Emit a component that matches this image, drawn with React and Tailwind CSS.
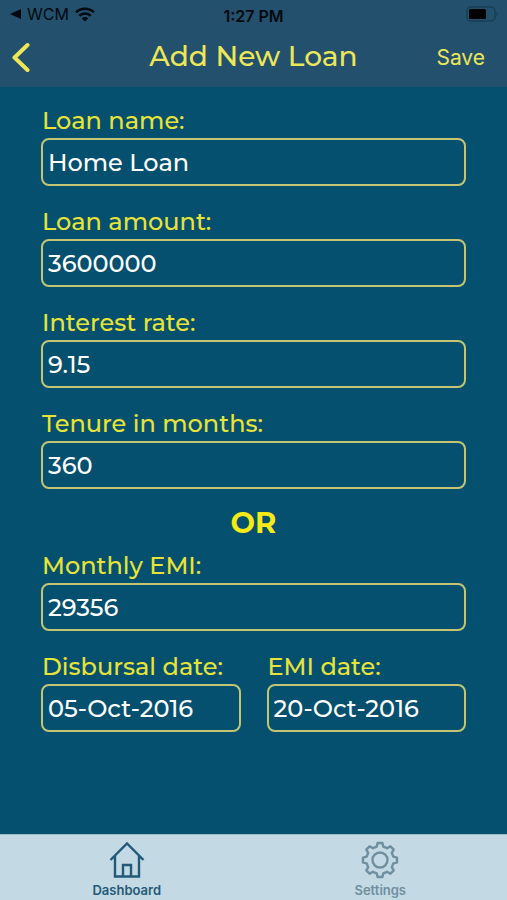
import React, { useState } from "react";

const TOOTH = [
  [17.2, -8],
  [17.2, 8],
  [13.8, 14],
  [13.8, 31],
];

const gearPath = () => {
  const points = [];
  for (let i = 0; i < 8; i++) {
    TOOTH.forEach(([radius, offset]) => {
      const angle = ((i * 45 + offset) * Math.PI) / 180;
      points.push(
        `${(20 + radius * Math.sin(angle)).toFixed(1)} ${(20 - radius * Math.cos(angle)).toFixed(1)}`
      );
    });
  }
  return `M${points.join("L")}Z`;
};

const StatusBar = () => (
  <div className="grid grid-cols-3 items-center h-7 px-2 text-[#020a10]">
    <div className="flex items-center gap-[6px] pl-[2px] text-base">
      <svg width="11" height="10" viewBox="0 0 11 10" fill="currentColor">
        <path d="M0 5 11 0v10Z" />
      </svg>
      <span>WCM</span>
      <svg width="20" height="15" viewBox="0 0 20 15" fill="none" stroke="currentColor" strokeWidth="2.6">
        <path d="M1 5.4a13 13 0 0 1 18 0" />
        <path d="M4.3 8.8a8.2 8.2 0 0 1 11.4 0" />
        <path d="M10 14.6 6.8 11.4a4.6 4.6 0 0 1 6.4 0Z" fill="currentColor" stroke="none" />
      </svg>
    </div>
    <div className="pt-[3px] text-center text-base font-semibold whitespace-nowrap">1:27 PM</div>
    <svg className="justify-self-end" width="33" height="16" viewBox="0 0 33 16">
      <rect x="1" y="1" width="28" height="14" rx="4" fill="none" stroke="#173f56" strokeWidth="1.5" />
      <rect x="3" y="3" width="17" height="10" rx="1.5" fill="#000" />
      <path d="M30.5 5.5a3 3 0 0 1 0 5Z" fill="#173f56" />
    </svg>
  </div>
);

const Field = ({ id, label, value, onChange }) => (
  <div className="flex flex-col min-w-0">
    <label htmlFor={id} className="h-9 pl-px leading-[38px] text-2xl font-medium text-[#e8e337] whitespace-nowrap">
      {label}
    </label>
    <input
      id={id}
      name={id}
      type="text"
      value={value}
      onChange={onChange}
      className="w-full h-12 rounded-lg border-2 border-[#c3c573] bg-transparent px-[5px] text-2xl font-medium text-white outline-none"
    />
  </div>
);

const App = () => {
  const [loan, setLoan] = useState({
    name: "Home Loan",
    amount: "3600000",
    rate: "9.15",
    tenure: "360",
    emi: "29356",
    disbursalDate: "05-Oct-2016",
    emiDate: "20-Oct-2016",
  });

  const handleChange = (e) => {
    setLoan({ ...loan, [e.target.name]: e.target.value });
  };

  return (
    <div className="flex flex-col min-h-screen bg-[#05506e] font-['Montserrat','Inter',sans-serif]">
      <header className="bg-[#23506d] pb-[2px] font-['Inter',sans-serif]">
        <StatusBar />
        <div className="grid grid-cols-[1fr_auto_1fr] items-center h-[57px] px-[11px] text-[#ece659]">
          <button type="button" aria-label="Back" className="justify-self-start">
            <svg width="20" height="30" viewBox="0 0 20 30" fill="none" stroke="currentColor" strokeWidth="4" strokeLinecap="round" strokeLinejoin="round">
              <path d="M16.5 3 3.5 15.5 16.5 28" />
            </svg>
          </button>
          <h1 className="pb-[2px] font-['Montserrat','Inter',sans-serif] text-[28px] leading-9 font-medium">
            Add New Loan
          </h1>
          <button type="button" className="justify-self-end pt-[3px] pr-[11px] text-[21px]">
            Save
          </button>
        </div>
      </header>

      <main className="flex-1 px-[41px] pt-[15px]">
        <form>
          <div className="flex flex-col gap-[17px]">
            <Field id="name" label="Loan name:" value={loan.name} onChange={handleChange} />
            <Field id="amount" label="Loan amount:" value={loan.amount} onChange={handleChange} />
            <Field id="rate" label="Interest rate:" value={loan.rate} onChange={handleChange} />
            <Field id="tenure" label="Tenure in months:" value={loan.tenure} onChange={handleChange} />
          </div>
          <p className="pt-4 pb-[6px] text-center text-[29px] leading-9 font-bold text-[#f5e916]">OR</p>
          <div className="flex flex-col gap-[17px]">
            <Field id="emi" label="Monthly EMI:" value={loan.emi} onChange={handleChange} />
            <div className="grid grid-cols-2 gap-[26px]">
              <Field id="disbursalDate" label="Disbursal date:" value={loan.disbursalDate} onChange={handleChange} />
              <Field id="emiDate" label="EMI date:" value={loan.emiDate} onChange={handleChange} />
            </div>
          </div>
        </form>
      </main>

      <nav className="grid grid-cols-2 h-[66px] border-t border-[#9dbccb] bg-[#c3d9e3] font-['Inter',sans-serif] text-[13px] font-semibold">
        <a href="#dashboard" className="flex flex-col items-center pt-[5px] text-[#23597a]">
          <svg width="40" height="40" viewBox="0 0 40 40" fill="none" stroke="currentColor" strokeWidth="2.4">
            <path d="M3.5 20 20 3.5 36.5 20M8 16v20.5h24V16M16 36V25h8v11" />
          </svg>
          <span className="leading-5">Dashboard</span>
        </a>
        <a href="#settings" className="flex flex-col items-center pt-[5px] text-[#6f8f9f]">
          <svg width="40" height="40" viewBox="0 0 40 40" fill="none" stroke="currentColor" strokeWidth="2.4" strokeLinejoin="round">
            <path d={gearPath()} />
            <circle cx="20" cy="20" r="7.5" />
          </svg>
          <span className="leading-5">Settings</span>
        </a>
      </nav>
    </div>
  );
};

export default App;
